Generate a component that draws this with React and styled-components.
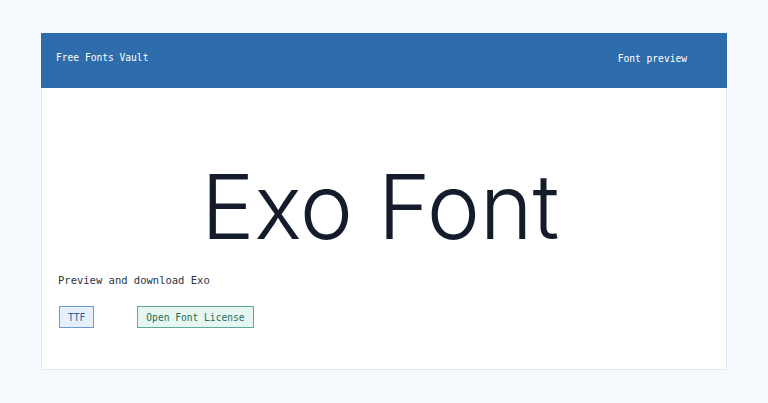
import React from 'react'
import styled, { createGlobalStyle } from 'styled-components'

const GlobalStyle = createGlobalStyle`
  html, body {
    margin: 0;
    padding: 0;
    background: #f6f9fd;
  }
  body {
    font-family: "DejaVu Sans Mono", "Liberation Mono", monospace;
  }
`

const Page = styled.div`
  padding: 33px 41px;
`

const Card = styled.div`
  background: #ffffff;
  border: 1px solid #e3e8f0;
  border-top: none;
  height: 337px;
  display: flex;
  flex-direction: column;
  box-sizing: border-box;
`

const Header = styled.header`
  background: #2f6cac;
  color: #ffffff;
  height: 55px;
  display: flex;
  align-items: center;
  justify-content: space-between;
  padding: 0 40px 0 15px;
  margin: 0 -1px;
  font-size: 9.6px;
`

const Brand = styled.div`
  margin-top: -6px;
`

const Nav = styled.div`
  margin-top: -4px;
`

const Body = styled.main`
  flex: 1;
  display: flex;
  flex-direction: column;
  padding: 0 16px;
`

const Title = styled.h1`
  margin: 69px 0 0;
  padding-right: 8px;
  text-align: center;
  font-family: "Inter", "Noto Sans", sans-serif;
  font-weight: 300;
  font-size: 90px;
  line-height: 100px;
  color: #141c2b;
  letter-spacing: -0.3px;
`

const Subtitle = styled.p`
  margin: 17px 0 0;
  font-size: 10.5px;
  color: #2c3444;
`

const Actions = styled.div`
  display: flex;
  gap: 43px;
  margin-top: 20px;
  padding-left: 1px;
`

const Tag = styled.span`
  display: inline-flex;
  align-items: center;
  height: 22px;
  box-sizing: border-box;
  padding: 0 8px;
  font-size: 9.6px;
  border: 1px solid ${p => p.$border};
  background: ${p => p.$bg};
  color: ${p => p.$color};
`

export default function App() {
  return (
    <>
      <GlobalStyle />
      <Page>
        <Card>
          <Header>
            <Brand>Free Fonts Vault</Brand>
            <Nav>Font preview</Nav>
          </Header>
          <Body>
            <Title>Exo Font</Title>
            <Subtitle>Preview and download Exo</Subtitle>
            <Actions>
              <Tag $bg="#e6f0fc" $border="#6f9bd1" $color="#2f5f9a">TTF</Tag>
              <Tag $bg="#e6f6f1" $border="#5fa99a" $color="#1f6d5c">Open Font License</Tag>
            </Actions>
          </Body>
        </Card>
      </Page>
    </>
  )
}
